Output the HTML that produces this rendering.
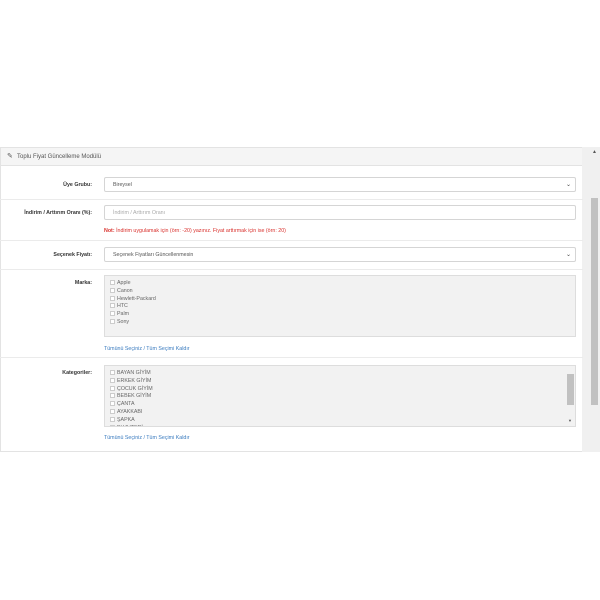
<!DOCTYPE html>
<html><head><meta charset="utf-8"><style>
*{box-sizing:border-box;margin:0;padding:0}
body{width:600px;height:600px;background:#fff;font-family:"Liberation Sans",sans-serif;font-size:5px;color:#555;position:relative;overflow:hidden}
.a{position:absolute}
.panel{left:0;top:147px;width:583px;height:305px;border:1px solid #e3e3e3;border-right:none;overflow:hidden}
.hdr{left:0;top:0;width:583px;height:18px;background:#f5f5f5;border-bottom:1px solid #e3e3e3;font-size:6px;color:#555;line-height:18px;padding-left:16px}
.line{left:0;width:583px;height:1px;background:#ebebeb}
.lbl{left:0;width:92px;font-weight:bold;color:#333;font-size:5.3px;text-align:right;white-space:nowrap}
.ctl{left:104px;width:472px;height:15px;border:1px solid #d5d5d5;border-radius:2px;background:#fff;font-size:5.3px;line-height:14px;padding-left:8px;color:#555}
.chev{position:absolute;right:4px;top:0;font-size:6px;color:#444}
.box{left:104px;width:472px;height:62px;border:1px solid #ddd;background:#f2f2f2;padding:4px 0 0 5px;overflow:hidden}
.box div{height:7.8px;line-height:7.8px;font-size:5.3px;color:#666}
.box span{display:inline-block;width:5px;height:5px;border:1px solid #ccc;background:#fff;vertical-align:middle;margin-right:2px}
.lnk{left:104px;font-size:5.3px;color:#3a7bbf}
</style></head><body>
<div class="a panel">
<div class="a hdr"><span style="position:absolute;left:6px;top:0;font-size:7px">&#9998;</span>Toplu Fiyat Güncelleme Modülü</div>
</div>
<div class="a" style="left:582px;top:147px;width:18px;height:305px;background:#f0f0f0"></div>
<div class="a" style="left:591px;top:198px;width:7px;height:207px;background:#c1c1c1"></div>
<div class="a" style="left:592px;top:149px;font-size:5px;color:#555">▲</div>
<div class="a line" style="top:199px"></div>
<div class="a line" style="top:240px"></div>
<div class="a line" style="top:269px"></div>
<div class="a line" style="top:357px"></div>

<div class="a lbl" style="top:182px">Üye Grubu:</div>
<div class="a ctl" style="top:177px">Bireysel<span class="chev">&#8964;</span></div>
<div class="a lbl" style="top:210px">İndirim / Arttırım Oranı (%):</div>
<div class="a ctl" style="top:205px;color:#aaa">İndirim / Arttırım Oranı</div>
<div class="a" style="left:104px;top:228px;font-size:5.3px;color:#d9302c"><b>Not:</b> İndirim uygulamak için (örn: -20) yazınız. Fiyat arttırmak için ise (örn: 20)</div>
<div class="a lbl" style="top:252px">Seçenek Fiyatı:</div>
<div class="a ctl" style="top:247px">Seçenek Fiyatları Güncellenmesin<span class="chev">&#8964;</span></div>

<div class="a lbl" style="top:280px">Marka:</div>
<div class="a box" style="top:275px">
<div><span></span>Apple</div><div><span></span>Canon</div><div><span></span>Hewlett-Packard</div><div><span></span>HTC</div><div><span></span>Palm</div><div><span></span>Sony</div>
</div>
<div class="a lnk" style="top:346px">Tümünü Seçiniz / Tüm Seçimi Kaldır</div>

<div class="a lbl" style="top:370px">Kategoriler:</div>
<div class="a box" style="top:365px">
<div><span></span>BAYAN GİYİM</div><div><span></span>ERKEK GİYİM</div><div><span></span>ÇOCUK GİYİM</div><div><span></span>BEBEK GİYİM</div><div><span></span>ÇANTA</div><div><span></span>AYAKKABI</div><div><span></span>ŞAPKA</div><div><span></span>BUJUTERİ</div>
</div>
<div class="a" style="left:567px;top:374px;width:7px;height:31px;background:#c1c1c1"></div>
<div class="a" style="left:568px;top:418px;font-size:4px;color:#555">▼</div>
<div class="a lnk" style="top:435px">Tümünü Seçiniz / Tüm Seçimi Kaldır</div>
</body></html>
